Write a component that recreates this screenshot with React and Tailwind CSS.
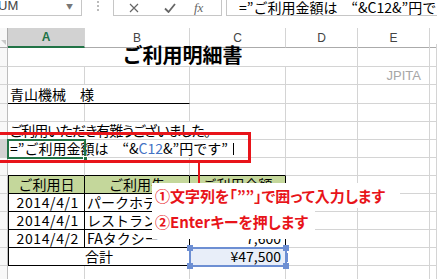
import React from 'react';

const row = 'grid grid-cols-[8px_77px_105px_96px_72px_72px_7px]';
const gray = 'border-r border-b border-[#d4d4d4]';
const hdr = 'border-r border-b border-r-[#bdbdbd] border-b-[#d4d4d4] bg-[#f8f8f8]';

const Cell = ({ b = gray, className = '', children }) => (
  <div className={`flex items-center overflow-hidden whitespace-nowrap px-[2px] ${b} ${className}`}>{children}</div>
);

const Blank = () => <Cell />;

// narrow quote marks, like the spreadsheet font draws them
const Q = ({ c }) => <span className="[font-feature-settings:'palt']">{c}</span>;

const Formula = ({ blue }) => (
  <>
    =<Q c="”" />ご利用金額は　<Q c="“" />&amp;<span className={blue ? 'text-[#4472c4]' : ''}>C12</span>&amp;<Q c="”" />円です<Q c="”" />
  </>
);

export default function App() {
  return (
    <div className="relative w-[437px] h-[279px] overflow-hidden bg-white text-black font-['Noto_Sans_CJK_JP',sans-serif] text-[14px]">
      {/* formula bar */}
      <div className="flex h-[28px] bg-white">
        <div className="flex w-[82px] h-[16px] items-end justify-between border-r border-b border-[#c6c6c6] pr-[8px] pb-[3px]">
          <span className="ml-[-2px] font-['Liberation_Sans',sans-serif] text-[13px] leading-[12px] text-[#444]">UM</span>
          <span className="text-[7px] leading-[12px] text-[#777]">▼</span>
        </div>
        <div className="flex w-[31px] flex-col items-center gap-[2px] pt-[1px]">
          <span className="h-[2px] w-[2px] bg-[#bbb]" />
          <span className="h-[2px] w-[2px] bg-[#bbb]" />
          <span className="h-[2px] w-[2px] bg-[#bbb]" />
        </div>
        <div className="flex w-[109px] h-[16px] items-center border-l border-r border-b border-[#c6c6c6]">
          <svg className="ml-[15px]" width="10" height="10" viewBox="0 0 10 10">
            <path d="M1 1L9 9M9 1L1 9" stroke="#666" strokeWidth="1.2" />
          </svg>
          <svg className="ml-[25px]" width="12" height="10" viewBox="0 0 12 10">
            <path d="M1 5.5L4.5 9L11 1" stroke="#666" strokeWidth="1.8" fill="none" />
          </svg>
          <span className="ml-[18px] font-['Liberation_Serif',serif] italic text-[13px] leading-none text-[#666]">fx</span>
        </div>
        <div className="ml-[4px] flex flex-1 h-[16px] items-end overflow-hidden border-l border-b border-[#c6c6c6] pl-[12px] whitespace-nowrap">
          <span className="text-[14px] leading-[15px]"><Formula /></span>
        </div>
      </div>

      {/* column headers */}
      <div className={`${row} h-[16px] text-[12px] font-['Liberation_Sans',sans-serif] text-[#444]`}>
        <div className="relative border-r border-b border-[#ababab] bg-[#f8f8f8]">
          <span className="absolute right-[1px] bottom-[2px] h-0 w-0 border-l-[5px] border-t-[5px] border-l-transparent border-t-[#c8c8c8]" />
        </div>
        <div className="flex items-center justify-center border-r border-[#d4d4d4] border-b-2 border-b-[#217346] bg-[#d2d2d2] font-bold text-[#217346]">A</div>
        <div className="flex items-center justify-center border-r border-b border-r-[#d4d4d4] border-b-[#ababab]">B</div>
        <div className="flex items-center justify-center border-r border-b border-r-[#d4d4d4] border-b-[#ababab]">C</div>
        <div className="flex items-center justify-center border-r border-b border-r-[#d4d4d4] border-b-[#ababab]">D</div>
        <div className="flex items-center justify-center border-r border-b border-r-[#d4d4d4] border-b-[#ababab]">E</div>
        <div className="border-b border-[#ababab]" />
      </div>

      {/* title */}
      <div className={`${row} h-[23px]`}>
        <div className={hdr} />
        <Cell className="col-span-4 justify-center text-[20px] font-bold">ご利用明細書</Cell>
        <Blank />
        <Blank />
      </div>

      <div className={`${row} h-[18px]`}>
        <div className={hdr} />
        <Blank /><Blank /><Blank /><Blank />
        <Cell className="justify-end pr-[8px] font-['Liberation_Sans',sans-serif] text-[13px] text-[#a6a6a6]">JPITA</Cell>
        <Blank />
      </div>

      <div className={`${row} h-[19px]`}>
        <div className={hdr} />
        <Cell b="border-r border-b border-r-[#d4d4d4] border-b-black" className="col-span-2">青山機械　様</Cell>
        <Blank /><Blank /><Blank /><Blank />
      </div>

      <div className={`${row} h-[18px]`}>
        <div className={hdr} />
        <Blank /><Blank /><Blank /><Blank /><Blank /><Blank />
      </div>

      <div className={`${row} h-[18px]`}>
        <div className={hdr} />
        <Cell className="col-span-3 tracking-[-1px] [font-feature-settings:'palt']">ご利用いただき有難うございました。</Cell>
        <Blank /><Blank /><Blank />
      </div>

      <div className={`${row} h-[18px]`}>
        <div className="border-r border-b border-r-[#217346] border-b-[#d4d4d4] bg-[#d2d2d2]" />
        <Cell className="col-span-3">
          <span><Formula blue /></span>
          <span className="ml-[5px] h-[12px] w-px bg-black" />
        </Cell>
        <Blank /><Blank /><Blank />
      </div>

      <div className={`${row} h-[18px]`}>
        <div className={hdr} />
        <Cell b="border-r border-b border-r-[#d4d4d4] border-b-black" />
        <Cell b="border-r border-b border-r-[#d4d4d4] border-b-black" />
        <Cell b="border-r border-b border-r-[#d4d4d4] border-b-black" />
        <Blank /><Blank /><Blank />
      </div>

      {/* table */}
      <div className={`${row} h-[18px]`}>
        <div className={hdr} />
        <Cell b="border-l border-r border-b border-black" className="justify-center bg-[#c4d79b]">ご利用日</Cell>
        <Cell b="border-r border-b border-black" className="justify-center bg-[#c4d79b]">ご利用先</Cell>
        <Cell b="border-r border-b border-black" className="justify-center bg-[#c4d79b]">ご利用金額</Cell>
        <Blank /><Blank /><Blank />
      </div>

      {[
        ['2014/4/1', 'パークホテル横浜', '25,000'],
        ['2014/4/1', 'レストランさくら', '14,900'],
        ['2014/4/2', 'FAタクシー', '7,600'],
      ].map(([d, p, v]) => (
        <div key={p} className={`${row} h-[18px]`}>
          <div className={hdr} />
          <Cell b="border-l border-r border-b border-black" className="justify-end pr-[5px] tracking-[0.6px]">{d}</Cell>
          <Cell b="border-r border-b border-black">{p}</Cell>
          <Cell b="border-r border-b border-black" className="justify-end pr-[4px]">{v}</Cell>
          <Blank /><Blank /><Blank />
        </div>
      ))}

      <div className={`${row} h-[18px]`}>
        <div className={hdr} />
        <Cell b="border-l border-r border-b border-black" className="col-span-2 justify-center">合計</Cell>
        <Cell b="border-r border-b border-black" className="justify-end pr-[4px] bg-[#e8eef9]">¥47,500</Cell>
        <Blank /><Blank /><Blank />
      </div>

      <div className={`${row} h-[18px]`}>
        <div className={hdr} />
        <Blank /><Blank /><Blank /><Blank /><Blank /><Blank />
      </div>

      {/* active cell A */}
      <div className="absolute left-[7px] top-[139px] h-[20px] w-[79px] border-2 border-[#217346]">
        <span className="absolute right-[-4px] bottom-[-4px] h-[5px] w-[5px] border border-white bg-[#217346]" />
      </div>

      {/* selection on total */}
      <div className="absolute left-[189px] top-[247px] h-[20px] w-[98px] border-2 border-[#6d8fd3]">
        <span className="absolute left-[-4px] top-[-4px] h-[6px] w-[6px] bg-[#6d8fd3]" />
        <span className="absolute right-[-4px] top-[-4px] h-[6px] w-[6px] bg-[#6d8fd3]" />
        <span className="absolute left-[-4px] bottom-[-4px] h-[6px] w-[6px] bg-[#6d8fd3]" />
        <span className="absolute right-[-4px] bottom-[-4px] h-[6px] w-[6px] bg-[#6d8fd3]" />
        <span className="absolute right-[-3px] top-[4px] h-[9px] w-[3px] bg-[#6d8fd3]" />
      </div>

      {/* red annotation */}
      <div className="absolute left-[-3px] top-[132px] h-[31px] w-[254px] border-[3px] border-[#e8141a]" />
      <div className="absolute left-[198px] top-[163px] h-[20px] w-[2px] bg-[#e8141a]" />

      <div className="absolute left-[152px] top-[183px] flex flex-col items-start font-bold text-[15px] text-[#e8141a] [font-feature-settings:'palt']">
        <div className="w-[248px] h-[25px] bg-white pl-[3px] pt-[4px] leading-[18px]">①文字列を「””」で囲って入力します</div>
        <div className="w-[163px] h-[31px] bg-white pl-[3px] pt-[5px] leading-[18px]">②Enterキーを押します</div>
      </div>
    </div>
  );
}
